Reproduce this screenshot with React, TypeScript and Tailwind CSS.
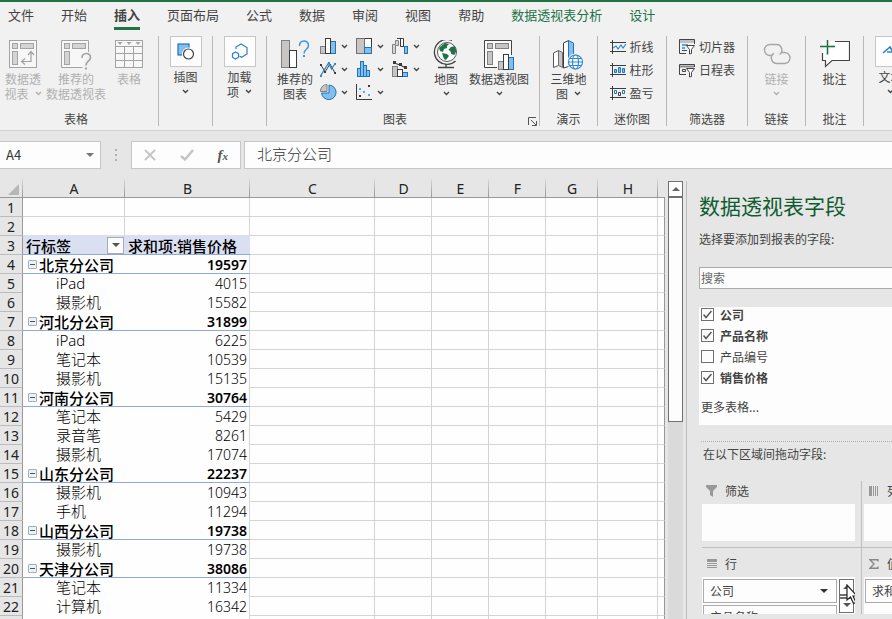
import { useState } from "react"
import type { ReactNode } from "react"

const tabs = ['文件', '开始', '插入', '页面布局', '公式', '数据', '审阅', '视图', '帮助', '数据透视表分析', '设计']

const columns = [
  { name: 'A', width: 102 },
  { name: 'B', width: 125 },
  { name: 'C', width: 125 },
  { name: 'D', width: 57 },
  { name: 'E', width: 57 },
  { name: 'F', width: 57 },
  { name: 'G', width: 52 },
  { name: 'H', width: 60 },
  { name: '', width: 7 },
]

interface PivotRow {
  label: string
  value: string
  group?: boolean
}

const pivotRows: PivotRow[] = [
  { label: '北京分公司', value: '19597', group: true },
  { label: 'iPad', value: '4015' },
  { label: '摄影机', value: '15582' },
  { label: '河北分公司', value: '31899', group: true },
  { label: 'iPad', value: '6225' },
  { label: '笔记本', value: '10539' },
  { label: '摄影机', value: '15135' },
  { label: '河南分公司', value: '30764', group: true },
  { label: '笔记本', value: '5429' },
  { label: '录音笔', value: '8261' },
  { label: '摄影机', value: '17074' },
  { label: '山东分公司', value: '22237', group: true },
  { label: '摄影机', value: '10943' },
  { label: '手机', value: '11294' },
  { label: '山西分公司', value: '19738', group: true },
  { label: '摄影机', value: '19738' },
  { label: '天津分公司', value: '38086', group: true },
  { label: '笔记本', value: '11334' },
  { label: '计算机', value: '16342' },
]

/* ---------- icons ---------- */

const Caret = ({ muted = false }: { muted?: boolean }) => (
  <svg width="7" height="5" viewBox="0 0 7 5" fill="none" stroke={muted ? '#b0b0b0' : '#444'} strokeWidth="1.4">
    <path d="M1 1l2.5 2.5L6 1" />
  </svg>
)

const Triangle = ({ up = false, color = '#555' }: { up?: boolean; color?: string }) => (
  <svg width="8" height="4" viewBox="0 0 8 4" fill={color}>
    {up ? <path d="M0 4L4 0l4 4z" /> : <path d="M0 0h8L4 4z" />}
  </svg>
)

const PivotTableIcon = () => (
  <svg width="28" height="30" viewBox="0 0 28 30" fill="#d4d4d4" stroke="#a3a3a3">
    <rect x=".5" y=".5" width="27" height="27" fill="#f7f7f7" />
    <rect x="3.5" y="3.5" width="5" height="5" />
    <rect x="11.5" y="3.5" width="13" height="5" />
    <rect x="3.5" y="11.5" width="5" height="13" />
    <path fill="none" d="M22 12v9.500H13M19 15l3-3.500 3 3.500M16 18.500l-3.500 3 3.500 3" strokeWidth="1.200" />
  </svg>
)

const RecommendedPivotIcon = () => (
  <svg width="31" height="30" viewBox="0 0 31 30" fill="#d4d4d4" stroke="#a3a3a3">
    <path d="M27.500 12V.5H.5v27h21" fill="#f7f7f7" />
    <rect x="3.500" y="3.500" width="5" height="5" />
    <rect x="11.500" y="3.500" width="13" height="5" />
    <rect x="3.500" y="11.500" width="5" height="13" />
    <path fill="none" strokeWidth="1.600" d="M21 18c0-6 8.500-6 8.500-.5 0 4-4.500 3.500-4.500 8" />
    <path strokeWidth="2" d="M24 28.500h2" />
  </svg>
)

const TableIcon = () => (
  <svg width="28" height="30" viewBox="0 0 28 30" fill="none" stroke="#a3a3a3">
    <rect x=".5" y=".5" width="27" height="27" fill="#f7f7f7" />
    <path d="M.5 6.500h27M.5 13.500h27M.5 20.500h27M9.500 6v21M18.500 6v21" />
    <path fill="#a3a3a3" stroke="none" d="M2.500 2h5L5 5zM11.500 2h5L14 5zM20.500 2h5L23 5z" />
  </svg>
)

const ShapesIcon = () => (
  <svg width="18" height="18" viewBox="0 0 18 18">
    <rect x="1" y="1" width="11" height="11" fill="#83beec" stroke="#1e74bb" strokeWidth="1.200" />
    <circle cx="11.500" cy="11" r="6.500" fill="#fdfdfd" />
    <circle cx="11.500" cy="11" r="5" fill="#fdfdfd" stroke="#444" strokeWidth="1.200" />
  </svg>
)

const AddinIcon = () => (
  <svg width="18" height="18" viewBox="0 0 18 18" fill="none" stroke="#2b82cc" strokeWidth="1.200">
    <path d="M5 6V4l5-3 6 3.500v6.500l-5.500 3.200L8.500 13" />
    <path d="M4.500 9l3 1.600v3.600l-3 1.800-3-1.800v-3.600z" />
  </svg>
)

const RecommendedChartIcon = () => (
  <svg width="30" height="30" viewBox="0 0 30 30">
    <rect x="1.500" y=".5" width="8" height="27" fill="#c8c6c4" stroke="#808080" />
    <rect x="9.500" y="10.500" width="7" height="17" fill="#fff" stroke="#3b3b3b" />
    <path fill="none" stroke="#4098d8" strokeWidth="1.500" d="M19.500 6c0-6.500 9-6.500 9-.5 0 4-4.500 3.500-4.500 8" />
    <path stroke="#4098d8" strokeWidth="2" d="M23 16h2" />
  </svg>
)

const small = { width: 17, height: 17, viewBox: '0 0 17 17' }

const ColumnIcon = () => (
  <svg {...small}>
    <rect x=".5" y="8.500" width="5" height="7" fill="#c8c6c4" stroke="#808080" />
    <rect x="10.500" y="3.500" width="5" height="12" fill="#83beec" stroke="#1e74bb" />
    <rect x="5.500" y=".5" width="5" height="15" fill="#fff" stroke="#3b3b3b" />
  </svg>
)

const TreemapIcon = () => (
  <svg {...small}>
    <rect x="8.500" y=".5" width="7" height="9" fill="#fff" stroke="#3b3b3b" />
    <rect x=".5" y=".5" width="8" height="15" fill="#c8c6c4" stroke="#707070" />
    <rect x="8.500" y="9.500" width="7" height="6" fill="#83beec" stroke="#1e74bb" />
  </svg>
)

const WaterfallIcon = () => (
  <svg {...small} fill="none">
    <path d="M.5 15.500v-9h3v-4h3v5h-3v8z" stroke="#808080" fill="#d8d6d4" />
    <path d="M5 .5h6.500v8h1M8.500 .5v8h3" stroke="#3b3b3b" fill="#fff" />
    <rect x="12.500" y="8.500" width="3" height="7" fill="#83beec" stroke="#1e74bb" />
  </svg>
)

const LineIcon = () => (
  <svg {...small} fill="none">
    <path d="M1 4l4 7 5-8 5 9" stroke="#3b3b3b" />
    <path d="M1 15l8-13 3 6 4-6" stroke="#2f8ad3" strokeWidth="1.300" transform="translate(-.5 0)" />
    <path d="M0 3h2v2H0zM4 10h2v2H4zM14 11h2v2h-2z" fill="#3b3b3b" />
    <path d="M0 14h2v2H0zM8 1h2v2H8zM14 2h2v2h-2z" fill="#2f8ad3" />
  </svg>
)

const HistogramIcon = () => (
  <svg {...small} fill="#83beec" stroke="#1e74bb">
    <rect x="1.500" y="7.500" width="3" height="8" />
    <rect x="4.500" y=".5" width="3" height="15" />
    <rect x="7.500" y="4.500" width="3" height="11" />
    <rect x="10.500" y="9.500" width="3" height="6" />
  </svg>
)

const ComboIcon = () => (
  <svg {...small}>
    <rect x=".5" y="5.500" width="5" height="10" fill="#c8c6c4" stroke="#808080" />
    <rect x="10.500" y="11.500" width="5" height="4" fill="#83beec" stroke="#1e74bb" />
    <rect x="5.500" y="8.500" width="5" height="7" fill="#fff" stroke="#3b3b3b" />
    <path d="M2 2l6 2 6 3" fill="none" stroke="#3b3b3b" strokeWidth="1.200" />
    <path d="M1 0h3v3H1zM7 2h3v3H7zM12 5h3v3h-3z" fill="#3b3b3b" />
  </svg>
)

const PieIcon = () => (
  <svg {...small}>
    <path d="M9 1a7.300 7.300 0 1 1-7.500 8H9z" fill="#83beec" stroke="#1e74bb" />
    <path d="M7 .5A6.500 6.500 0 0 0 .5 7.500H7z" fill="#c8c6c4" stroke="#808080" />
  </svg>
)

const ScatterIcon = () => (
  <svg {...small}>
    <path d="M.5 0v15.500H16" fill="none" stroke="#3b3b3b" />
    <path d="M12 1h2v2h-2zM3 11h2v2H3z" fill="#3b3b3b" />
    <path d="M3 4h2v2H3zM7 7h2v2H7zM12 10h2v2h-2z" fill="#5ea9e2" />
  </svg>
)

const GlobeIcon = () => (
  <svg width="28" height="30" viewBox="0 0 28 30">
    <circle cx="15" cy="12" r="9.500" fill="#fff" stroke="#555" />
    <g fill="#217346">
      <path d="M9 6l4-3 4 1-2 2v2l-3 1-1 3-3-1-1-3z" />
      <path d="M19 7l4-1 1.300 5-2 4-3-1-1-3-2-1z" />
      <path d="M10 13l5 1 2 2-3 4-2-1z" />
    </g>
    <path d="M20 .5A12.500 12.500 0 1 0 23.500 21" fill="none" stroke="#444" strokeWidth="1.300" />
    <path d="M14 24v3.500M6 27.500h16" stroke="#444" strokeWidth="1.400" />
  </svg>
)

const PivotChartIcon = () => (
  <svg width="30" height="30" viewBox="0 0 30 30">
    <path d="M27.500 15V.5H.5v27H13" fill="#fbfbfb" stroke="#444" />
    <g fill="#c8c6c4" stroke="#808080">
      <rect x="3.500" y="3.500" width="5" height="5" />
      <rect x="11.500" y="3.500" width="13" height="5" />
      <rect x="3.500" y="11.500" width="5" height="13" />
      <rect x="14.500" y="21.500" width="5" height="8" />
    </g>
    <rect x="24.500" y="17.500" width="5" height="12" fill="#83beec" stroke="#1e74bb" />
    <rect x="19.500" y="14.500" width="5" height="15" fill="#fff" stroke="#3b3b3b" />
  </svg>
)

const Map3dIcon = () => (
  <svg width="32" height="30" viewBox="0 0 32 30">
    <path d="M1.500 13l5-2.500v15l-5 2z" fill="#fff" stroke="#555" />
    <path d="M6.500 10.500l4 2v15l-4-2z" fill="#c8c6c4" stroke="#707070" />
    <path d="M11.500 3l5-2.500v26l-5 1.500z" fill="#fff" stroke="#3b3b3b" />
    <path d="M16.500.5l5 2.500v16l-5 7z" fill="#83beec" stroke="#1e74bb" />
    <circle cx="23.500" cy="22" r="8.500" fill="#f1f1f1" />
    <g fill="#fff" stroke="#2f8ad3" strokeWidth="1.200">
      <circle cx="23.500" cy="22" r="7" />
      <ellipse cx="23.500" cy="22" rx="3" ry="7" />
      <path d="M16.500 22h14M17.500 18.500h12M17.500 25.500h12" />
    </g>
  </svg>
)

const SparkIcon = ({ kind }: { kind: 'line' | 'column' | 'winloss' }) => (
  <svg width="16" height="14" viewBox="0 0 16 14" fill="none" stroke="#3b3b3b">
    <path d="M2.500 0v14M0 2.500h16M0 11.500h16" />
    {kind === 'line' && <path d="M3 8l3-2 2 3 3-4 2 3 3-4" stroke="#2f8ad3" strokeWidth="1.200" />}
    {kind === 'column' && (
      <g stroke="#1e74bb" fill="#83beec">
        <path d="M4.500 6.500h2v3h-2zM8.500 4.500h2v5h-2zM12.500 5.500h2v4h-2z" />
      </g>
    )}
    {kind === 'winloss' && (
      <g fill="#fff">
        <path d="M4.500 4.500h2v3h-2zM12.500 4.500h2v3h-2z" stroke="#1e74bb" />
        <path d="M8.500 6.500h2v3h-2z" />
      </g>
    )}
  </svg>
)

const SlicerIcon = ({ timeline = false }: { timeline?: boolean }) => (
  <svg width="17" height="16" viewBox="0 0 17 16" fill="none" stroke="#444">
    {timeline ? (
      <>
        <path d="M7 12.500H.5V2.500h15V5" />
        <path d="M1 4.500h14" stroke="#8a8a8a" strokeWidth="2" />
        <path d="M3.500 7.500h3v2h-3z" />
      </>
    ) : (
      <>
        <path d="M7 14.500H.5V.5h15V5" />
        <path d="M1 2.500h14" stroke="#c0c0c0" strokeWidth="3" />
        <path d="M3 6h6M3 9h3" stroke="#2f8ad3" strokeWidth="1.500" />
        <path d="M3 11.500h5" />
      </>
    )}
    <path d="M7.500 6.500h8l-3 4v4l-2 .5v-4.500z" fill="#fff" />
  </svg>
)

const LinkIcon = () => (
  <svg width="28" height="30" viewBox="0 0 28 30" fill="none" stroke="#a6a6a6" strokeWidth="1.400">
    <path d="M9 15.500H7a5.500 5.500 0 0 1 0-11h6a5.500 5.500 0 0 1 3.500 10" />
    <path d="M19 12.500h2.500a5.500 5.500 0 0 1 0 11H14a5.500 5.500 0 0 1-3-10.200" />
  </svg>
)

const CommentIcon = () => (
  <svg width="30" height="30" viewBox="0 0 30 30">
    <path d="M2.500 1.500h27v19H12l-6.500 6v-6h-3z" fill="#fff" />
    <path d="M15 1.500h14.500v19H12L5.500 26.500v-6h-3V13" fill="none" stroke="#444" strokeWidth="1.200" />
    <path d="M7.500 0v14.500M0 6.500h15" stroke="#f1f1f1" strokeWidth="4" />
    <path d="M7.500-1v15.500M0 6.500h15" stroke="#217346" strokeWidth="1.500" />
  </svg>
)

/* ---------- ribbon ---------- */

interface GroupProps {
  label: string
  className: string
  labelClassName?: string
  launcher?: boolean
  children: ReactNode
}

const Group = ({ label, className, labelClassName = '', launcher, children }: GroupProps) => (
  <section className={`relative flex shrink-0 flex-col border-r border-[#b8b8b8] ${className}`}>
    <div className="flex flex-1 justify-center">{children}</div>
    <div className={`h-4 text-center leading-[18px] ${labelClassName}`}>{label}</div>
    {launcher && (
      <button aria-label="图表选项" className="absolute right-0.5 bottom-0">
        <svg width="9" height="9" viewBox="0 0 9 9" fill="none" stroke="#555">
          <path d="M.5 8V.5H8M3 3l5 5M8.500 4v4.500H4" />
        </svg>
      </button>
    )}
  </section>
)

interface BigButtonProps {
  icon: ReactNode
  lines: string[]
  className?: string
  caret?: 'inline' | 'below'
  muted?: boolean
  framed?: boolean
}

const BigButton = ({ icon, lines, className = '', caret, muted, framed }: BigButtonProps) => (
  <button className={`flex shrink-0 flex-col items-center leading-[15px] whitespace-nowrap ${muted ? 'text-[#b0b0b0]' : ''} ${className}`}>
    {framed
      ? <span className="mb-0.5 flex h-[31px] w-8 items-center justify-center border border-[#c6c6c6] bg-[#fdfdfd]">{icon}</span>
      : <span className="mt-1 mb-px flex h-[30px] items-center">{icon}</span>}
    {lines.map((line, i) => (
      <span key={line} className="flex items-center gap-1.5">
        {line}
        {caret === 'inline' && i === lines.length - 1 && <Caret muted={muted} />}
      </span>
    ))}
    {caret === 'below' && <span className="flex h-[15px] items-center"><Caret muted={muted} /></span>}
  </button>
)

const ChartButton = ({ icon, label }: { icon: ReactNode; label: string }) => (
  <button aria-label={label} className="flex h-[23px] w-9 items-center gap-1">
    {icon}
    <Caret />
  </button>
)

const RowButton = ({ icon, label }: { icon: ReactNode; label: string }) => (
  <button className="flex h-[23px] items-center gap-[3px]">
    {icon}
    {label}
  </button>
)

const Ribbon = () => {
  const [active, setActive] = useState('插入')

  return (
    <header className="shrink-0 border-t-2 border-b border-t-[#217346] border-b-[#cfcfcf] bg-[#f1f1f1] text-[#444]">
      <nav className="flex h-[34px] gap-[27px] overflow-hidden pl-2 text-[13px]">
        {tabs.map((tab, i) => (
          <button
            key={tab}
            onClick={() => setActive(tab)}
            className={`flex h-7 shrink-0 items-center border-b-3 ${i > 8 ? 'text-[#217346]' : ''} ${active === tab ? 'border-[#217346] font-bold' : 'border-transparent'}`}
          >
            {tab}
          </button>
        ))}
      </nav>
      <div className="mb-1 flex h-[90px] text-xs">
        <Group label="表格" className="w-[159px] pr-[6px]">
          <BigButton className="w-[46px]" icon={<PivotTableIcon />} lines={['数据透', '视表']} caret="inline" muted />
          <BigButton className="w-[60px]" icon={<RecommendedPivotIcon />} lines={['推荐的', '数据透视表']} muted />
          <BigButton className="w-[46px]" icon={<TableIcon />} lines={['表格']} muted />
        </Group>
        <Group label="" className="w-[54px]">
          <BigButton icon={<ShapesIcon />} lines={['插图']} caret="below" framed />
        </Group>
        <Group label="" className="w-[54px]">
          <BigButton icon={<AddinIcon />} lines={['加载', '项']} caret="inline" framed />
        </Group>
        <Group label="图表" className="w-[273px] pr-0.5" labelClassName="pr-3.5" launcher>
          <BigButton className="w-[50px]" icon={<RecommendedChartIcon />} lines={['推荐的', '图表']} />
          <div className="-mt-px grid h-[69px] grid-flow-col grid-rows-3">
            <ChartButton label="柱形图" icon={<ColumnIcon />} />
            <ChartButton label="折线图" icon={<LineIcon />} />
            <ChartButton label="饼图" icon={<PieIcon />} />
            <ChartButton label="层次结构图" icon={<TreemapIcon />} />
            <ChartButton label="统计图" icon={<HistogramIcon />} />
            <ChartButton label="散点图" icon={<ScatterIcon />} />
            <ChartButton label="瀑布图" icon={<WaterfallIcon />} />
            <ChartButton label="组合图" icon={<ComboIcon />} />
          </div>
          <BigButton className="w-9" icon={<GlobeIcon />} lines={['地图']} caret="below" />
          <BigButton className="w-[70px]" icon={<PivotChartIcon />} lines={['数据透视图']} caret="below" />
        </Group>
        <Group label="演示" className="w-[58px]">
          <BigButton icon={<Map3dIcon />} lines={['三维地', '图']} caret="inline" />
        </Group>
        <Group label="迷你图" className="w-[69px]">
          <div className="-mt-px flex flex-col">
            <RowButton icon={<SparkIcon kind="line" />} label="折线" />
            <RowButton icon={<SparkIcon kind="column" />} label="柱形" />
            <RowButton icon={<SparkIcon kind="winloss" />} label="盈亏" />
          </div>
        </Group>
        <Group label="筛选器" className="w-[81px]">
          <div className="-mt-px flex flex-col">
            <RowButton icon={<SlicerIcon />} label="切片器" />
            <RowButton icon={<SlicerIcon timeline />} label="日程表" />
          </div>
        </Group>
        <Group label="链接" className="w-[58px]">
          <BigButton icon={<LinkIcon />} lines={['链接']} caret="below" muted />
        </Group>
        <Group label="批注" className="w-[58px]">
          <BigButton icon={<CommentIcon />} lines={['批注']} />
        </Group>
        <Group label="" className="w-[54px]">
          <BigButton
            framed
            caret="below"
            lines={['文本']}
            icon={
              <svg width="18" height="18" viewBox="0 0 18 18" fill="none" stroke="#2b82cc" strokeWidth="1.600">
                <path d="M1 10l7-6 6 10M5 9h6" />
              </svg>
            }
          />
        </Group>
      </div>
    </header>
  )
}

/* ---------- formula bar ---------- */

const FormulaBar = () => {
  const [formula, setFormula] = useState('北京分公司')

  return (
    <div className="flex shrink-0 items-center py-2.5">
      <div className="flex h-7 w-[101px] items-center border border-l-0 border-[#c6c6c6] bg-[#fdfdfd] pr-1.5">
        <input aria-label="名称框" defaultValue="A4" className="w-0 flex-1 pl-1.5 text-[13px] text-[#333] outline-none" />
        <Triangle color="#777" />
      </div>
      <div className="flex w-[30px] flex-col items-center gap-[3px]">
        <i className="size-0.5 bg-[#b0b0b0]" />
        <i className="size-0.5 bg-[#b0b0b0]" />
        <i className="size-0.5 bg-[#b0b0b0]" />
      </div>
      <div className="mr-[3px] flex h-7 w-[110px] items-center justify-around border border-[#c6c6c6] bg-[#fdfdfd]">
        <button aria-label="取消">
          <svg width="12" height="12" viewBox="0 0 12 12" stroke="#c4c4c4" strokeWidth="1.800"><path d="M1 1l10 10M11 1L1 11" /></svg>
        </button>
        <button aria-label="输入">
          <svg width="14" height="12" viewBox="0 0 14 12" fill="none" stroke="#c4c4c4" strokeWidth="2.400"><path d="M1 7l4 3.500L13 1" /></svg>
        </button>
        <button className="font-['Liberation_Serif',serif] text-[15px] leading-4 font-bold text-[#555] italic">
          f<span className="text-[11px]">x</span>
        </button>
      </div>
      <input
        aria-label="编辑栏"
        value={formula}
        onChange={e => setFormula(e.target.value)}
        className="h-7 min-w-0 flex-1 border border-r-0 border-[#c6c6c6] bg-[#fdfdfd] pb-[3px] pl-3 text-[15px] font-light text-[#333] outline-none"
      />
    </div>
  )
}

/* ---------- sheet ---------- */

const rowHead = 'h-[19px] border-r border-b border-r-[#999] border-b-[#bcbcbc] bg-[#e6e6e6] p-0 pt-0.5 text-center font-normal text-[#222]'
const colHead = 'h-[19px] border-b border-[#999] bg-[linear-gradient(to_top,#999,#d8d8d8)] bg-[length:1px_100%] bg-right bg-no-repeat p-0 pt-0.5 font-normal text-[#222] last:bg-none'
const grid = 'border-r border-b border-[#d4d4d4] p-0'

const EmptyCells = () => (
  <>
    {columns.slice(2).map(col => (
      <td key={col.name} className={`${grid} last:border-r-[#999]`} />
    ))}
  </>
)

const Sheet = () => (
  <div className="shrink-0 overflow-hidden">
    <table className="w-[665px] table-fixed border-separate border-spacing-0 bg-[#fefefe] font-['Noto_Sans','Noto_Sans_CJK_SC',sans-serif] text-[14px] leading-4 whitespace-nowrap text-black">
      <colgroup>
        <col className="w-[23px]" />
        {columns.map(col => <col key={col.name} style={{ width: col.width }} />)}
      </colgroup>
      <thead>
        <tr className="bg-[#e6e6e6]">
          <th className={colHead}>
            <svg width="11" height="11" viewBox="0 0 11 11" className="ml-2" fill="#b4b6b8"><path d="M11 0v11H0z" /></svg>
          </th>
          {columns.map(col => <th key={col.name} className={colHead}>{col.name}</th>)}
        </tr>
      </thead>
      <tbody>
        <tr>
          <th className={rowHead}>1</th>
          <td className={grid} />
          <td className={grid} />
          <EmptyCells />
        </tr>
        <tr>
          <th className={rowHead}>2</th>
          <td className={`${grid} border-b-[#dae0f2]`} />
          <td className={`${grid} border-b-[#dae0f2]`} />
          <EmptyCells />
        </tr>
        <tr>
          <th className={rowHead}>3</th>
          <td className="border-b border-[#8ea9db] bg-[#dae0f2] p-0">
            <div className="flex h-[18px] items-center justify-between pr-px pl-[3px] text-[15px] font-medium">
              <span className="pt-px">行标签</span>
              <button aria-label="筛选行标签" className="flex h-[17px] w-[17px] items-center justify-center border border-[#ababab] bg-[#fbfbfb]">
                <Triangle />
              </button>
            </div>
          </td>
          <td className="border-b border-[#8ea9db] bg-[#dae0f2] p-0 pt-px pl-[3px] text-[15px] font-medium">求和项:销售价格</td>
          <EmptyCells />
        </tr>
        {pivotRows.map((row, i) => (
          <tr key={i}>
            <th className={rowHead}>{i + 4}</th>
            <td className={`border-b p-0 text-[15px] ${row.group ? 'border-[#8ea9db] font-medium' : 'border-transparent font-light'}`}>
              {row.group ? (
                <div className="flex h-[18px] items-center gap-0.5 pt-px pl-[5px]">
                  <button aria-label={`折叠${row.label}`} className="flex size-[9px] items-center justify-center rounded-[1px] border border-[#9fb0bd] bg-[#eef1f4]">
                    <i className="h-px w-[5px] bg-[#44546a]" />
                  </button>
                  {row.label}
                </div>
              ) : (
                <div className="h-[18px] pt-px pl-[33px]">{row.label}</div>
              )}
            </td>
            <td className={`border-r border-b border-r-[#d4d4d4] p-0 pt-0.5 pr-0.5 text-right ${row.group ? 'border-b-[#8ea9db] font-semibold' : 'border-b-transparent font-light'}`}>
              {row.value}
            </td>
            <EmptyCells />
          </tr>
        ))}
        <tr>
          <th className={rowHead} />
          <td className="p-0" />
          <td className="border-r border-[#d4d4d4] p-0" />
          <EmptyCells />
        </tr>
      </tbody>
    </table>
  </div>
)

const SheetScrollbar = () => (
  <div className="mt-0.5 ml-[3px] flex w-[15px] shrink-0 flex-col bg-[#dadada]">
    <button aria-label="向上滚动" className="flex h-4 shrink-0 items-center justify-center border border-[#707070] bg-[#fdfdfd]">
      <Triangle up color="#666" />
    </button>
    <div className="h-[225px] shrink-0 border border-[#707070] bg-[#fdfdfd]" />
  </div>
)

/* ---------- field pane ---------- */

const Checkbox = ({ label, initial }: { label: string; initial: boolean }) => {
  const [checked, setChecked] = useState(initial)

  return (
    <label className={`flex h-[21px] items-center gap-[6px] ${checked ? 'font-bold' : ''}`}>
      <span className="grid size-[13px] place-items-center">
        <input
          type="checkbox"
          checked={checked}
          onChange={e => setChecked(e.target.checked)}
          className="col-start-1 row-start-1 size-[13px] appearance-none border border-[#707070] bg-[#fdfdfd]"
        />
        {checked && (
          <svg width="9" height="9" viewBox="0 0 9 9" fill="none" stroke="#555" strokeWidth="1.500" className="pointer-events-none col-start-1 row-start-1">
            <path d="M.5 4.500l2.500 3L8.500 1" />
          </svg>
        )}
      </span>
      {label}
    </label>
  )
}

const FieldItem = ({ label }: { label: string }) => (
  <button className="flex h-6 w-[134px] shrink-0 items-center justify-between border border-[#ababab] bg-[#fdfdfd] pr-2 pl-1.5">
    {label}
    <Triangle color="#333" />
  </button>
)

const Area = ({ icon, title, children }: { icon: ReactNode; title: string; children?: ReactNode }) => (
  <div>
    <div className="flex h-[23px] items-center gap-2 pb-1 pl-1">
      <span className="flex w-[11px] justify-center">{icon}</span>
      {title}
    </div>
    <div className="flex h-[37px] w-[153px] justify-between overflow-hidden bg-[#fdfdfd] pt-0.5 pr-px pl-px">{children}</div>
  </div>
)

const FieldPane = () => (
  <aside className="mt-0.5 ml-[3px] min-w-0 flex-1 overflow-hidden border-l border-[#bdbdbd] pl-3 text-xs whitespace-nowrap text-[#444]">
    <h2 className="mt-2 h-8 text-[21px] leading-8 text-[#0f5c30]">数据透视表字段</h2>
    <p className="mt-2.5 h-4 leading-4">选择要添加到报表的字段:</p>
    <input
      aria-label="搜索字段"
      placeholder="搜索"
      className="mt-5 block h-[22px] w-full border border-r-0 border-[#ababab] bg-[#fdfdfd] pb-0.5 pl-px outline-none placeholder:text-[#666]"
    />
    <div className="mt-[18px] flow-root h-[118px] bg-[#fdfdfd] pl-0.5">
      <div className="-mt-[3px]">
        <Checkbox label="公司" initial />
        <Checkbox label="产品名称" initial />
        <Checkbox label="产品编号" initial={false} />
        <Checkbox label="销售价格" initial />
      </div>
      <a href="#more" className="mt-[11px] block leading-4">更多表格...</a>
    </div>
    <div className="mt-4 ml-0.5 border-t border-dotted border-[#b0b0b0]" />
    <p className="mt-1 ml-1 h-4 leading-4">在以下区域间拖动字段:</p>
    <div className="mt-[19px] ml-[3px] flex w-[340px]">
      <div className="w-[159px] shrink-0">
        <Area
          title="筛选"
          icon={<svg width="11" height="12" viewBox="0 0 11 12" fill="#999"><path d="M0 0h11v2L7 6v6l-3-2V6L0 2z" /></svg>}
        />
        <div className="my-[6px] border-t border-[#bdbdbd]" />
        <Area
          title="行"
          icon={<svg width="10" height="10" viewBox="0 0 10 10" fill="#999"><path d="M0 0h10v3H0zM0 4h10v1H0zM0 6h10v1H0zM0 8h10v1H0z" /></svg>}
        >
          <div className="flex flex-col gap-0.5">
            <FieldItem label="公司" />
            <FieldItem label="产品名称" />
          </div>
          <div className="relative flex h-[34px] w-[15px] flex-col items-center justify-between border border-[#707070] bg-[#fdfdfd] py-[5px]">
            <Triangle up />
            <i className="h-[5px] w-full border-y-2 border-[#707070]" />
            <Triangle />
            <svg width="14" height="22" viewBox="0 0 14 22" className="absolute top-1 left-1.5" fill="#fff" stroke="#222" strokeWidth="1.200">
              <path d="M1 1v15l3.500-3 3 6.500 2.500-1-3-6.500h4z" />
            </svg>
          </div>
        </Area>
      </div>
      <div className="w-[160px] shrink-0 border-l border-[#bdbdbd] pl-0.5">
        <Area
          title="列"
          icon={<svg width="10" height="10" viewBox="0 0 10 10" fill="#999"><path d="M0 0h3v10H0zM4 0h1v10H4zM6 0h1v10H6zM8 0h1v10H8z" /></svg>}
        />
        <div className="my-[6px] -ml-0.5 border-t border-[#bdbdbd]" />
        <Area
          title="值"
          icon={<svg width="10" height="10" viewBox="0 0 10 10" fill="none" stroke="#888" strokeWidth="1.400"><path d="M9 2.500V.700H1l4 4.300-4 4.300h8V7.500" /></svg>}
        >
          <FieldItem label="求和项:销售价格" />
        </Area>
      </div>
    </div>
  </aside>
)

export default function App() {
  return (
    <div className="flex h-screen flex-col overflow-hidden bg-[#e6e6e6] font-['Noto_Sans_CJK_SC',sans-serif]">
      <Ribbon />
      <FormulaBar />
      <main className="flex min-h-0 flex-1">
        <Sheet />
        <SheetScrollbar />
        <FieldPane />
      </main>
    </div>
  )
}
